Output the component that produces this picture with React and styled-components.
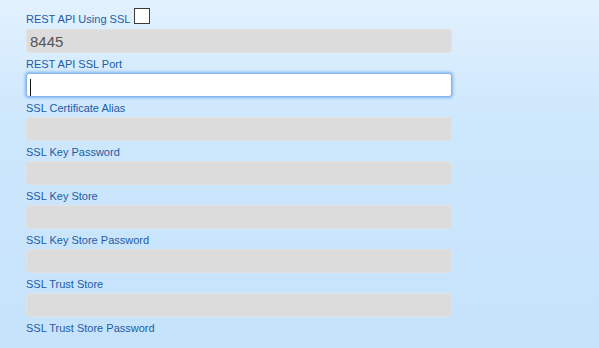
import React from "react";
import styled, { createGlobalStyle } from "styled-components";

const GlobalStyle = createGlobalStyle`
  html, body {
    margin: 0;
    height: 100%;
  }
  body {
    background: linear-gradient(to bottom, #e2f1fe 0%, #cde7fc 35%, #c6e3fc 100%);
    font-family: "Liberation Sans", Arial, sans-serif;
  }
`;

const Form = styled.div`
  padding: 8px 0 0 26px;
  width: 426px;
`;

const CheckRow = styled.div`
  display: flex;
  align-items: flex-start;
`;

const Label = styled.label`
  display: block;
  font-size: 11px;
  line-height: 14px;
  margin-top: 4px;
  color: #1d5ca6;
  white-space: nowrap;
`;

const Checkbox = styled.input`
  appearance: none;
  flex: none;
  width: 16px;
  height: 16px;
  margin: 0 0 0 4px;
  box-sizing: border-box;
  border: 1px solid #3a3a3a;
  background: #fff;
`;

const InputWrap = styled.div`
  position: relative;
`;

/* text cursor drawn over the focused field */
const Caret = styled.span`
  position: absolute;
  left: 4px;
  top: 6px;
  width: 1px;
  height: 17px;
  background: #111;
`;

const Input = styled.input`
  display: block;
  box-sizing: border-box;
  width: 426px;
  height: 24px;
  margin: ${(p) => (p.$first ? "3px" : "2px")} 0 0 0;
  padding: 0 3px;
  font-family: "Liberation Sans", Arial, sans-serif;
  font-size: 15px;
  color: #555;
  caret-color: transparent;
  border-radius: 3px;
  outline: none;
  border: 1px solid ${(p) => (p.$focused ? "#86b6ee" : "#e2e2e2")};
  background: ${(p) => (p.$focused ? "#fff" : "#dcdcdc")};
  box-shadow: ${(p) => (p.$focused ? "0 0 3px 1px #7fb2f0" : "none")};
`;

const Field = ({ label, value, focused }) => (
  <>
    <Label>{label}</Label>
    {focused ? (
      <InputWrap>
        <Input $focused defaultValue={value} />
        <Caret />
      </InputWrap>
    ) : (
      <Input defaultValue={value} readOnly />
    )}
  </>
);

const fields = [
  "SSL Certificate Alias",
  "SSL Key Password",
  "SSL Key Store",
  "SSL Key Store Password",
  "SSL Trust Store",
];

export default function App() {
  return (
    <>
      <GlobalStyle />
      <Form>
        <CheckRow>
          <Label>REST API Using SSL</Label>
          <Checkbox type="checkbox" />
        </CheckRow>
        <Input $first defaultValue="8445" readOnly />
        <Field label="REST API SSL Port" value="" focused />
        {fields.map((f) => (
          <Field key={f} label={f} value="" />
        ))}
        <Label>SSL Trust Store Password</Label>
      </Form>
    </>
  );
}
